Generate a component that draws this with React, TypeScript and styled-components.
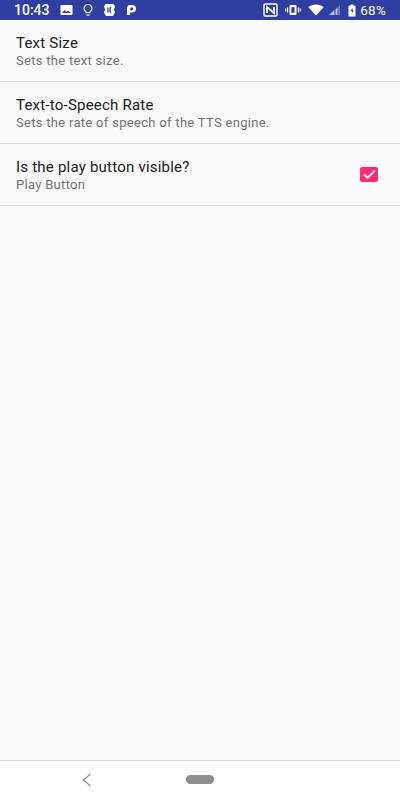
import React from 'react';
import styled, { createGlobalStyle } from 'styled-components';

const GlobalStyle = createGlobalStyle`
  html, body {
    margin: 0;
    padding: 0;
    background: #fafafa;
  }
  * {
    box-sizing: border-box;
  }
`;

const SScreen = styled.div`
  width: 400px;
  height: 800px;
  display: flex;
  flex-direction: column;
  overflow: hidden;
  background: #fafafa;
  font-family: Roboto, 'Liberation Sans', sans-serif;
`;

const SStatusBar = styled.div`
  height: 20px;
  flex: none;
  display: flex;
  align-items: center;
  justify-content: space-between;
  padding: 0 14px 0 14px;
  background: #303f9f;
  color: #fff;
`;

const SStatusGroup = styled.div<{ gap: number }>`
  display: flex;
  align-items: center;
  gap: ${({ gap }) => gap}px;
`;

const SClock = styled.span`
  font-size: 14px;
  font-weight: 500;
`;

const SBattery = styled.span`
  font-size: 13.5px;
  font-weight: 400;
  letter-spacing: 0.2px;
`;

const SList = styled.div`
  flex: 1;
`;

const SRow = styled.div`
  height: 62px;
  padding: 0 22px 0 16px;
  display: flex;
  align-items: center;
  justify-content: space-between;
  border-bottom: 1px solid #dcdcdc;
`;

const STexts = styled.div`
  display: flex;
  flex-direction: column;
`;

const STitle = styled.div`
  font-size: 15px;
  line-height: 20px;
  letter-spacing: 0.22px;
  color: #212121;
`;

const SSummary = styled.div`
  font-size: 13px;
  line-height: 15px;
  letter-spacing: 0.3px;
  color: #757575;
`;

const SCheckbox = styled.div`
  width: 18px;
  height: 15px;
  border-radius: 2px;
  background: #ff2d78;
  display: flex;
  align-items: center;
  justify-content: center;
`;

const SNavBar = styled.div`
  height: 40px;
  flex: none;
  display: flex;
  align-items: center;
  padding: 0 0 2px 82px;
  gap: 94px;
  background: #fff;
  border-top: 1px solid #dcdcdc;
`;

const SHomePill = styled.div`
  width: 28px;
  height: 9px;
  border-radius: 5px;
  background: #8e8e8e;
`;

const rows = [
  { title: 'Text Size', summary: 'Sets the text size.' },
  { title: 'Text-to-Speech Rate', summary: 'Sets the rate of speech of the TTS engine.' },
  { title: 'Is the play button visible?', summary: 'Play Button', checked: true },
];

const App = () => {
  return (
    <SScreen>
      <GlobalStyle />
      <SStatusBar>
        <SStatusGroup gap={10}>
          <SClock>10:43</SClock>
          {/* image */}
          <svg width="13" height="12" viewBox="0 0 13 12">
            <rect x="0.5" y="1" width="12" height="10" rx="1" fill="#fff" />
            <path d="M2 9l2.5-3 2 2 1.5-1.5L11 9z" fill="#303f9f" />
          </svg>
          {/* bulb */}
          <svg width="10" height="14" viewBox="0 0 11 14" fill="none" stroke="#fff" strokeWidth="1.2">
            <path d="M5.5 1a4.2 4.2 0 0 0-2.2 7.8V10h4.4V8.8A4.2 4.2 0 0 0 5.5 1z" />
            <path d="M3.6 12.5h3.8" />
          </svg>
          {/* app badge */}
          <svg width="13" height="14" viewBox="0 0 13 14">
            <path d="M2.5 1h8l1.5 2.5-1 3 1 3L10 13H3L1 9.5l1-3-1-3z" fill="#fff" />
            <path d="M5 4.5v5M8.2 4.5c-1.6 0-1.6 5 0 5" stroke="#303f9f" strokeWidth="1.3" fill="none" />
          </svg>
          {/* P */}
          <svg width="11" height="12" viewBox="0 0 11 12">
            <path d="M1 3.5A2.8 2.8 0 0 1 3.8 1h2.4a3.8 3.8 0 0 1 0 7.6H4V11H1z" fill="#fff" />
            <circle cx="5.7" cy="4.8" r="1.5" fill="#303f9f" />
          </svg>
        </SStatusGroup>
        <SStatusGroup gap={7}>
          {/* nfc */}
          <svg width="15" height="14" viewBox="0 0 15 14" fill="none" stroke="#fff">
            <rect x="1" y="1" width="13" height="12" rx="1" strokeWidth="1.4" />
            <path d="M4 10V4l7 6V4" strokeWidth="1.9" />
          </svg>
          {/* vibrate */}
          <svg width="16" height="12" viewBox="0 0 16 12" fill="none">
            <rect x="4.5" y="1" width="7" height="10" rx="1" fill="#fff" />
            <rect x="6.4" y="3.2" width="3.2" height="5.6" fill="#303f9f" />
            <path d="M2.6 3.5v5M0.7 4.5v3M13.4 3.5v5M15.3 4.5v3" stroke="#fff" strokeWidth="1.2" />
          </svg>
          <SStatusGroup gap={3}>
            {/* wifi */}
            <svg width="16" height="12" viewBox="0 0 16 12">
              <path d="M8 11.5L0.3 3.2C2.4 1.4 5 .5 8 .5s5.6.9 7.7 2.7z" fill="#fff" />
            </svg>
            {/* signal */}
            <svg width="14" height="12" viewBox="0 0 14 12">
              <path d="M13 1v10H2z" fill="#fff" fillOpacity="0.3" />
              <path d="M7 6.5V11H2zM9 4.5h1V11H9z" fill="#fff" fillOpacity="0.55" />
            </svg>
          </SStatusGroup>
          <SStatusGroup gap={4}>
            {/* battery */}
            <svg width="8" height="13" viewBox="0 0 8 13">
              <path d="M2.5 0.5h3v1.2H7.5v10.8H.5V1.7h2z" fill="#fff" />
              <path d="M4.6 3.5L2.6 7h1.3v2.5L5.6 6H4.4z" fill="#303f9f" />
            </svg>
            <SBattery>68%</SBattery>
          </SStatusGroup>
        </SStatusGroup>
      </SStatusBar>

      <SList>
        {rows.map((row) => (
          <SRow key={row.title}>
            <STexts>
              <STitle>{row.title}</STitle>
              <SSummary>{row.summary}</SSummary>
            </STexts>
            {row.checked && (
              <SCheckbox>
                <svg width="13" height="11" viewBox="0 0 12 10" fill="none">
                  <path d="M1 5l3.3 3L11 1.5" stroke="#fff" strokeWidth="1.7" />
                </svg>
              </SCheckbox>
            )}
          </SRow>
        ))}
      </SList>

      <SNavBar>
        <svg width="10" height="14" viewBox="0 0 10 14" fill="none">
          <path d="M8.5 1L1.5 7l7 6" stroke="#8a8a8a" strokeWidth="1.2" />
        </svg>
        <SHomePill />
      </SNavBar>
    </SScreen>
  );
};

export default App;
